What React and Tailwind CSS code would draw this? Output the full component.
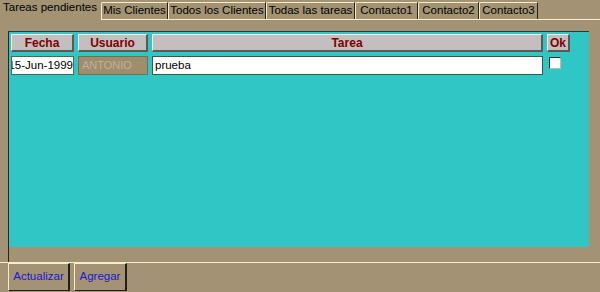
import React from "react";

const tabs = [
  { label: "Mis Clientes", w: "w-[67px]" },
  { label: "Todos los Clientes", w: "w-[98px]" },
  { label: "Todas las tareas", w: "w-[89px]" },
  { label: "Contacto1", w: "w-[63px]" },
  { label: "Contacto2", w: "w-[61px]" },
  { label: "Contacto3", w: "w-[59px]" },
];

function HeaderCell({ w, children }) {
  return (
    <div
      className={`${w} h-[18px] flex items-center justify-center bg-[#c3bfbf] border-t border-l border-[#eeeeee] border-b-2 border-r-2 border-b-[#5a5a50] border-r-[#5a5a50] text-[#800000] font-bold text-[12px]`}
    >
      {children}
    </div>
  );
}

export default function App() {
  return (
    <div className="w-[600px] h-[292px] bg-[#a39274] flex flex-col overflow-hidden font-['Liberation_Sans',Arial,sans-serif] text-[11px] text-black">
      {/* tab strip */}
      <div className="h-[19px] flex items-end">
        <div className="w-[101px] h-[19px] flex items-center pl-[3px] pb-[3px] whitespace-nowrap text-[11.5px]">
          Tareas pendientes
        </div>
        {tabs.map((t) => (
          <div
            key={t.label}
            className={`${t.w} h-[17px] flex items-center justify-center pb-[1px] whitespace-nowrap border-l border-t border-[#f6eec6] border-r border-r-[#23201a] rounded-tl-[2px] leading-none text-[11.5px]`}
          >
            {t.label}
          </div>
        ))}
      </div>

      {/* panel */}
      <div className="flex-1 flex flex-col">
        <div className="flex">
          <div className="w-[101px]" />
          <div className="flex-1 border-t border-[#f6eec6]" />
        </div>
        <div className="flex-1 pl-[8px] pt-[11px] flex flex-col">
          <div className="w-[581px] flex-1 border-l border-[#2a261c] flex flex-col">
            <div className="h-[216px] bg-[#30c6c6] border-t border-[#2a3a34] pl-[2px] pt-[2px] flex flex-col gap-[4px]">
              <div className="flex gap-[4px]">
                <HeaderCell w="w-[63px]">Fecha</HeaderCell>
                <HeaderCell w="w-[70px]">Usuario</HeaderCell>
                <HeaderCell w="w-[391px]">Tarea</HeaderCell>
                <HeaderCell w="w-[23px]">Ok</HeaderCell>
              </div>
              <div className="flex gap-[4px] items-start">
                <div className="w-[63px] h-[19px] bg-white border border-[#4a6a50] flex items-center justify-end overflow-hidden whitespace-nowrap text-[11.5px]">
                  15-Jun-1999
                </div>
                <div className="w-[70px] h-[19px] bg-[#9f8d6c] border border-[#7a6c52] flex items-center pl-[3px] text-[#bdb3a0]">
                  ANTONIO
                </div>
                <div className="w-[391px] h-[19px] bg-white border border-[#3a5a44] flex items-center pl-[2px] text-[11.5px]">
                  prueba
                </div>
                <div className="w-[12px] h-[12px] ml-[2px] mt-[1px] bg-white border border-[#303030] border-r-[#bbbbbb] border-b-[#bbbbbb]" />
              </div>
            </div>
            <div className="flex-1" />
          </div>
        </div>
      </div>

      {/* footer */}
      <div className="h-[30px] border-t border-[#f6eec6] flex items-start pl-[8px] gap-[4px]">
        <button className="w-[62px] h-[28px] border-t border-l border-[#f6eec6] border-r-2 border-b border-r-[#23201a] border-b-[#23201a] text-[#1a1ad0] text-[11.5px] flex items-center justify-center">
          Actualizar
        </button>
        <button className="w-[53px] h-[28px] border-t border-l border-[#f6eec6] border-r-2 border-b border-r-[#23201a] border-b-[#23201a] text-[#1a1ad0] text-[11.5px] flex items-center justify-center">
          Agregar
        </button>
      </div>
    </div>
  );
}
